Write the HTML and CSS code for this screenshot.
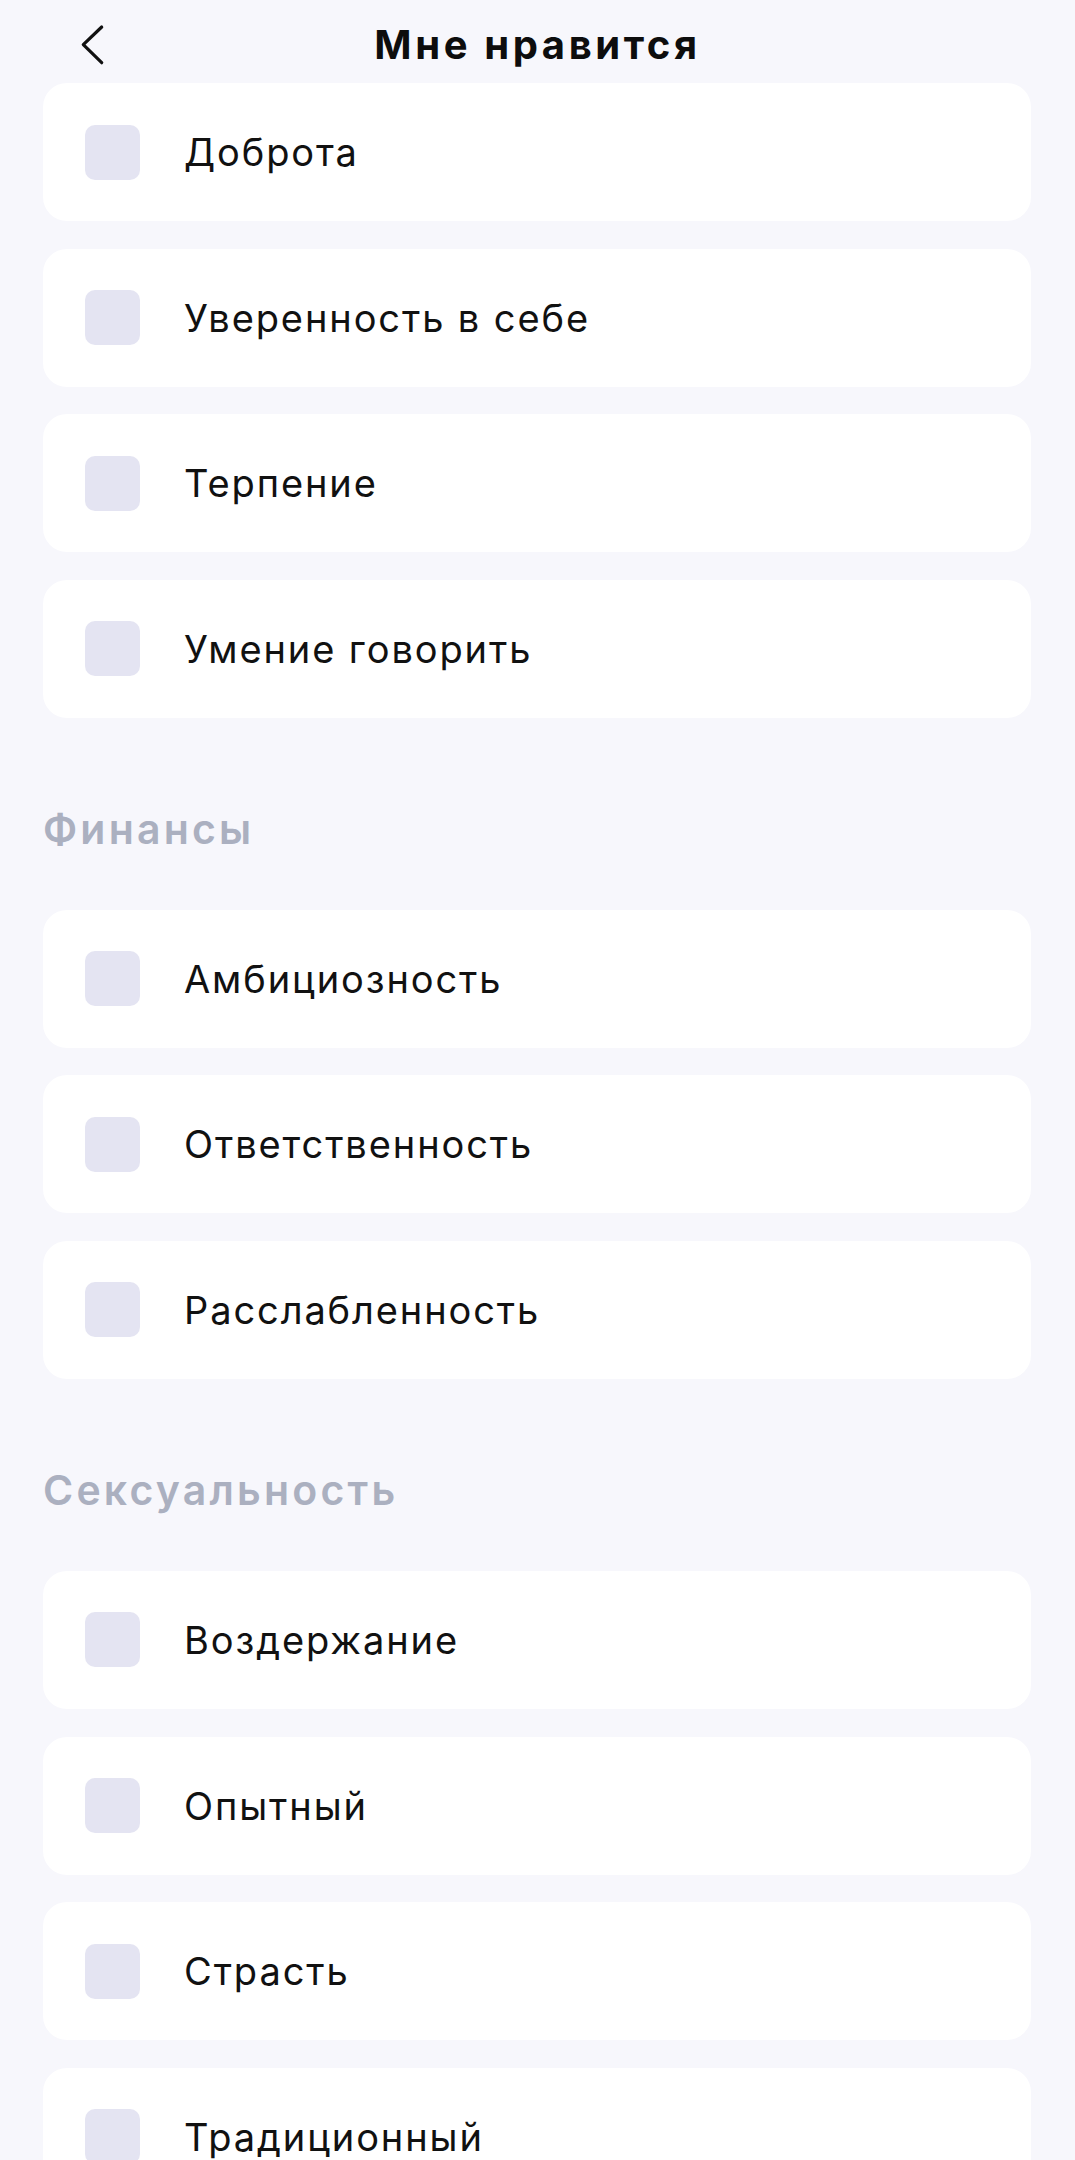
FILE: index.html
```html
<!DOCTYPE html>
<html lang="ru">
<head>
<meta charset="utf-8">
<title>Мне нравится</title>
<link rel="stylesheet" href="styles.css">
</head>
<body>
<header class="topbar">
  <button class="back" aria-label="Назад">
    <svg class="back-icon" width="30" height="44" viewBox="0 0 30 44" fill="none">
      <polyline points="21.7,4 3.3,21.7 21.7,39.7" stroke="#111" stroke-width="3.2" stroke-linecap="round" stroke-linejoin="round"/>
    </svg>
  </button>
  <h1 class="title">Мне нравится</h1>
  <span class="spacer"></span>
</header>
<main class="content">
  <ul class="list">
    <li class="item"><span class="check"></span><span class="label">Доброта</span></li>
    <li class="item"><span class="check"></span><span class="label">Уверенность в себе</span></li>
    <li class="item"><span class="check"></span><span class="label">Терпение</span></li>
    <li class="item"><span class="check"></span><span class="label">Умение говорить</span></li>
  </ul>
  <section class="group">
    <h2 class="group-title">Финансы</h2>
    <ul class="list">
      <li class="item"><span class="check"></span><span class="label">Амбициозность</span></li>
      <li class="item"><span class="check"></span><span class="label">Ответственность</span></li>
      <li class="item"><span class="check"></span><span class="label">Расслабленность</span></li>
    </ul>
  </section>
  <section class="group">
    <h2 class="group-title">Сексуальность</h2>
    <ul class="list">
      <li class="item"><span class="check"></span><span class="label">Воздержание</span></li>
      <li class="item"><span class="check"></span><span class="label">Опытный</span></li>
      <li class="item"><span class="check"></span><span class="label">Страсть</span></li>
      <li class="item"><span class="check"></span><span class="label">Традиционный</span></li>
    </ul>
  </section>
</main>
</body>
</html>
```
FILE: styles.css
```css
* { box-sizing: border-box; }
html, body { margin: 0; padding: 0; }
body {
  background: #F7F7FC;
  font-family: Inter, "Noto Sans", sans-serif;
  color: #111111;
  overflow: hidden;
}
.topbar {
  height: 83px;
  padding-top: 6px;
  display: grid;
  grid-template-columns: 1fr auto 1fr;
  align-items: center;
}
.back {
  justify-self: start;
  margin-left: 80px;
  padding: 0;
  border: 0;
  background: none;
  width: 30px;
  height: 44px;
  display: flex;
}
.title {
  margin: 0;
  font-size: 40px;
  line-height: 46px;
  font-weight: 700;
  letter-spacing: 3.6px;
  color: #0d0d0d;
}
.content {
  padding: 0 44px 0 43px;
}
.list {
  list-style: none;
  margin: 0;
  padding: 0;
  display: flex;
  flex-direction: column;
  gap: 27.6px;
}
.item {
  height: 138px;
  background: #FFFFFF;
  border-radius: 24px;
  display: flex;
  align-items: center;
  padding-left: 42px;
}
.check {
  width: 55px;
  height: 55px;
  border-radius: 10px;
  background: #E4E4F2;
  flex: none;
}
.label {
  margin-left: 44px;
  font-size: 38px;
  line-height: 46px;
  font-weight: 400;
  letter-spacing: 1.9px;
  color: #111111;
}
.group-title {
  margin: 87px 0 57px 0;
  font-size: 41px;
  line-height: 48px;
  font-weight: 600;
  letter-spacing: 3.2px;
  color: #ABB0C0;
}
```
